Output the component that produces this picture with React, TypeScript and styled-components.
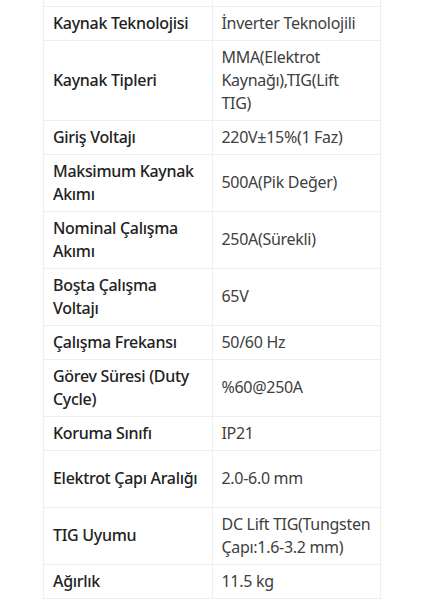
import * as React from 'react';
import styled, { createGlobalStyle } from 'styled-components';

const GlobalStyle = createGlobalStyle`
  html, body {
    margin: 0;
    padding: 0;
    background: #ffffff;
  }
  body {
    font-family: "Noto Sans", "Open Sans", sans-serif;
  }
`;

// --- Styled Components ---

const Page = styled.div`
  padding: 0 0 0 43px;
  width: 424px;
  box-sizing: border-box;
`;

const SpecTable = styled.table`
  width: 338px;
  border-collapse: collapse;
  table-layout: fixed;
  font-size: 16px;
  line-height: 23px;
  letter-spacing: -0.3px;
`;

const Row = styled.tr<{ $tall?: boolean; $stub?: boolean }>`
  height: ${props => (props.$stub ? '6px' : props.$tall ? '57px' : 'auto')};
`;

const LabelCell = styled.td`
  width: 169px;
  padding: 5px 8px 5px 9px;
  border: 1px solid #efefef;
  color: #222222;
  font-weight: 500;
  vertical-align: middle;
  box-sizing: border-box;
`;

const ValueCell = styled.td`
  padding: 5px 8px 5px 9px;
  border: 1px solid #efefef;
  color: #404040;
  font-weight: 400;
  vertical-align: middle;
  box-sizing: border-box;
`;

const StubCell = styled.td`
  padding: 0;
  border: 1px solid #efefef;
  border-top: none;
`;

type Spec = {
  label: string;
  value: string;
  tall?: boolean;
};

const specs: Spec[] = [
  { label: 'Kaynak Teknolojisi', value: 'İnverter Teknolojili' },
  { label: 'Kaynak Tipleri', value: 'MMA(Elektrot Kaynağı),TIG(Lift TIG)' },
  { label: 'Giriş Voltajı', value: '220V±15%(1 Faz)' },
  { label: 'Maksimum Kaynak Akımı', value: '500A(Pik Değer)' },
  { label: 'Nominal Çalışma Akımı', value: '250A(Sürekli)' },
  { label: 'Boşta Çalışma Voltajı', value: '65V' },
  { label: 'Çalışma Frekansı', value: '50/60 Hz' },
  { label: 'Görev Süresi (Duty Cycle)', value: '%60@250A' },
  { label: 'Koruma Sınıfı', value: 'IP21' },
  { label: 'Elektrot Çapı Aralığı', value: '2.0-6.0 mm', tall: true },
  { label: 'TIG Uyumu', value: 'DC Lift TIG(Tungsten Çapı:1.6-3.2 mm)' },
  { label: 'Ağırlık', value: '11.5 kg' },
];

function App() {
  return (
    <Page>
      <GlobalStyle />
      <SpecTable>
        <tbody>
          <Row $stub>
            <StubCell />
            <StubCell />
          </Row>
          {specs.map(spec => (
            <Row key={spec.label} $tall={spec.tall}>
              <LabelCell>{spec.label}</LabelCell>
              <ValueCell>{spec.value}</ValueCell>
            </Row>
          ))}
        </tbody>
      </SpecTable>
    </Page>
  );
}

export default App;
